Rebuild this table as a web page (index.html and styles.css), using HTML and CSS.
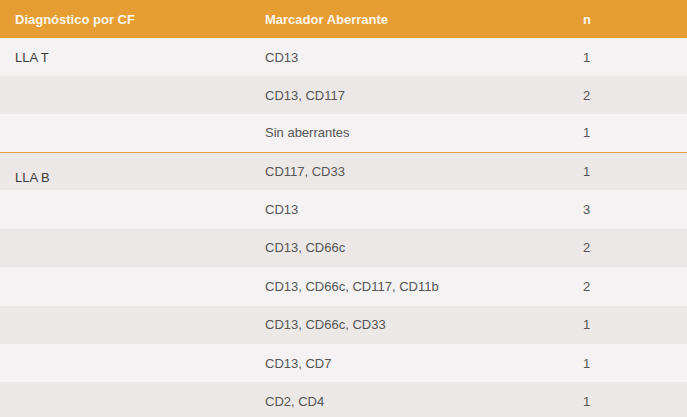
FILE: index.html
```html
<!DOCTYPE html>
<html lang="es">
<head>
<meta charset="utf-8">
<link rel="stylesheet" href="styles.css">
</head>
<body>
<table class="data">
  <thead>
    <tr>
      <th class="c1">Diagnóstico por CF</th>
      <th class="c2">Marcador Aberrante</th>
      <th class="c3">n</th>
    </tr>
  </thead>
  <tbody class="group group-t">
    <tr><td class="dx">LLA T</td><td>CD13</td><td>1</td></tr>
    <tr class="alt"><td></td><td>CD13, CD117</td><td>2</td></tr>
    <tr class="last"><td></td><td>Sin aberrantes</td><td>1</td></tr>
  </tbody>
  <tbody class="group group-b">
    <tr class="alt"><td class="dx dx-b">LLA B</td><td>CD117, CD33</td><td>1</td></tr>
    <tr><td></td><td>CD13</td><td>3</td></tr>
    <tr class="alt"><td></td><td>CD13, CD66c</td><td>2</td></tr>
    <tr><td></td><td>CD13, CD66c, CD117, CD11b</td><td>2</td></tr>
    <tr class="alt"><td></td><td>CD13, CD66c, CD33</td><td>1</td></tr>
    <tr><td></td><td>CD13, CD7</td><td>1</td></tr>
    <tr class="alt"><td></td><td>CD2, CD4</td><td>1</td></tr>
  </tbody>
</table>
</body>
</html>
```
FILE: styles.css
```css
html, body {
  margin: 0;
  padding: 0;
  background: #f4f2f2;
}
.data {
  width: 687px;
  border-collapse: collapse;
  font-family: "Liberation Sans", Arial, sans-serif;
  font-size: 13px;
  color: #555;
  table-layout: fixed;
}
.data th {
  background: #e59d34;
  color: #fdf6ea;
  font-weight: bold;
  text-align: left;
  height: 38px;
  padding: 0 0 0 15px;
  box-sizing: border-box;
  vertical-align: middle;
}
.data th.c1 { width: 250px; }
.data th.c2 { width: 318px; }
.data th.c3 { width: 119px; }
.data td {
  padding: 0 0 0 15px;
  box-sizing: border-box;
  vertical-align: middle;
  background: #f4f2f2;
}
.group-t td { height: 38px; }
.group-b td { height: 38.4px; }
.data tr.alt td {
  background: #ece8e7;
}
.group-t {
  border-bottom: 1px solid #e39a45;
}
.data td.dx {
  color: #3c3c3c;
}
.data td.dx-b {
  padding-top: 12px;
}
```
